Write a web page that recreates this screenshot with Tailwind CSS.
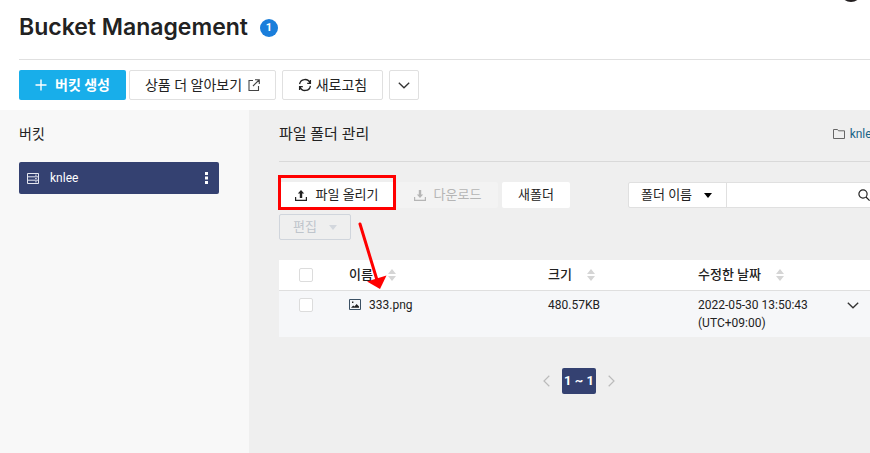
<!DOCTYPE html>
<html lang="ko">
<head>
<meta charset="utf-8">
<title>Bucket Management</title>
<script src="https://cdn.jsdelivr.net/npm/@tailwindcss/browser@4"></script>
</head>
<body class="relative flex min-h-screen flex-col overflow-x-hidden bg-white font-[Roboto,'Noto_Sans_CJK_KR',sans-serif] text-[13px] text-[#222]">
<div class="absolute -top-5 right-2 size-[22px] rounded-full bg-[#231f20]"></div>

<header class="pl-[19px]">
  <div class="flex h-[60px] items-center gap-3 border-b border-[#e0e0e0] pb-1">
    <h1 class="font-[Inter,sans-serif] text-[23px] font-semibold">Bucket Management</h1>
    <span class="flex size-[18px] items-center justify-center rounded-full bg-[#1a7edb] text-[11px] leading-none font-bold text-white">1</span>
  </div>
  <div class="flex h-[50px] items-center text-sm">
    <button class="mr-[3px] flex h-[30px] w-[107px] items-center justify-center gap-2 rounded-xs bg-[#18aeea] pb-px font-bold text-white">
      <svg class="size-3" viewBox="0 0 12 12" fill="none" stroke="currentColor" stroke-width="1.4"><path d="M6 .5v11M.5 6h11"/></svg>버킷 생성</button>
    <button class="mr-1.5 flex h-[30px] w-[147px] items-center justify-center gap-1.5 rounded-xs border border-[#e0e0e0] pb-px">상품 더 알아보기
      <svg class="size-3" viewBox="0 0 12 12" fill="none" stroke="#444" stroke-width="1.1"><path d="M5 1.5H1v10h9.5V7M7 .8h4.3V5M11 1 5 7"/></svg></button>
    <button class="mr-1.5 flex h-[30px] w-[101px] items-center justify-center gap-1 rounded-xs border border-[#e0e0e0] pb-px">
      <svg class="size-[14px]" viewBox="0 0 14 14" fill="none" stroke="#222" stroke-width="1.3"><path d="M1.6 6.2A5.4 5.4 0 0 1 12 5M12.4 7.8A5.4 5.4 0 0 1 2 9M12.4 2v3.3H9.2M1.6 12V8.7h3.2"/></svg>새로고침</button>
    <button aria-label="더 보기" class="flex h-[30px] w-[30px] items-center justify-center rounded-xs border border-[#e0e0e0]">
      <svg class="h-[7px] w-3" viewBox="0 0 12 7" fill="none" stroke="#333" stroke-width="1.3"><path d="m.8.8 5.2 5 5.2-5"/></svg></button>
  </div>
</header>

<div class="flex flex-1">
  <aside class="w-[249px] shrink-0 bg-[#f8f8f8] px-[19px] pt-3.5">
    <h2 class="text-sm leading-5">버킷</h2>
    <div class="mt-[18px] flex h-8 w-[200px] items-center rounded-xs bg-[#344171] px-2 text-white">
      <svg class="mr-[11px] h-[11px] w-3" viewBox="0 0 12 11" fill="none" stroke="#e4e6ef"><path d="M.5.5h11v10H.5zM.5 3.8h11M.5 7.2h11"/><path d="M8.2 2.2h1.5M8.2 5.5h1.5M8.2 8.8h1.5"/></svg>
      <a href="#" class="flex-1 text-xs">knlee</a>
      <button aria-label="메뉴" class="flex w-[10px] justify-center"><svg class="h-3 w-[3px]" viewBox="0 0 3 12" fill="currentColor"><path d="M0 0h3v3H0zM0 4.5h3v3H0zM0 9h3v3H0z"/></svg></button>
    </div>
  </aside>

  <main class="min-w-0 flex-1 overflow-hidden bg-[#efefef] pl-[30px]">
    <div class="flex h-[52px] items-center justify-between border-b border-[#d9d9d9] pb-[3px]">
      <h2 class="text-[15px]">파일 폴더 관리</h2>
      <nav class="-mr-2 flex items-center gap-[5px]">
        <svg class="h-[10px] w-3" viewBox="0 0 12 10" fill="none" stroke="#666"><path d="M.5 9.5v-9h4l1 1.3h6v7.7z"/></svg>
        <a href="#" class="text-xs text-[#1a6487]">knlee</a>
      </nav>
    </div>

    <div class="-mr-2 mt-5 flex items-start justify-between">
      <div>
        <div class="flex h-[26px] gap-1">
          <button class="relative flex w-[114px] items-center justify-center gap-2 bg-white pl-0.5">
            <svg class="h-[11px] w-3" viewBox="0 0 12 11" fill="#222"><path d="M6 0 2.8 3.5h2V8h2.4V3.5h2zM0 7h1.2v2.8h9.6V7H12v4H0z"/></svg>파일 올리기
            <span class="absolute -top-[7px] -right-[3px] -bottom-0.5 -left-px border-[3px] border-[#f00]"></span>
          </button>
          <button disabled class="flex w-[101px] items-center justify-center gap-2 rounded-xs bg-[#f3f3f3] text-[#b5b5b5]">
            <svg class="h-[11px] w-3" viewBox="0 0 12 11" fill="#b5b5b5"><path d="M6 8 2.8 4.5h2V0h2.4v4.5h2zM0 7h1.2v2.8h9.6V7H12v4H0z"/></svg>다운로드</button>
          <button class="w-[68px] rounded-xs bg-white">새폴더</button>
        </div>
        <button disabled class="mt-1.5 flex h-[26px] w-[72px] items-center justify-center gap-3 rounded-xs border border-[#d0d5dc] text-[#bfc5cc]">편집
          <svg class="h-[5px] w-2" viewBox="0 0 8 5" fill="#d3d7dd"><path d="M0 0h8L4 5z"/></svg></button>
      </div>
      <div class="flex h-[26px] w-[250px] rounded-xs border border-[#e0e0e0] bg-white">
        <div class="relative flex w-[98px] items-center border-r border-[#e0e0e0]">
          <select aria-label="검색 조건" class="w-full appearance-none pl-3 outline-none"><option>폴더 이름</option></select>
          <svg class="pointer-events-none absolute right-3.5 h-[5px] w-2" viewBox="0 0 8 5"><path d="M0 0h8L4 5z"/></svg>
        </div>
        <input aria-label="검색어" class="min-w-0 flex-1 px-2 outline-none">
        <button aria-label="검색" class="pr-[7px]"><svg class="size-3" viewBox="0 0 12 12" fill="none" stroke="#222" stroke-width="1.2"><circle cx="5" cy="5" r="4.1"/><path d="m8 8 3.6 3.6"/></svg></button>
      </div>
    </div>

    <table class="mt-5 w-full table-fixed border-collapse text-left">
      <colgroup><col class="w-[70px]"><col class="w-[199px]"><col class="w-[150px]"><col><col class="w-[34px]"></colgroup>
      <thead>
        <tr class="h-[30px] border-b border-[#dfdfdf] bg-white">
          <th class="pl-5"><input type="checkbox" aria-label="모두 선택" class="block size-[14px] appearance-none rounded-xs border border-[#dcdcdc] bg-white"></th>
          <th class="font-medium"><span class="flex items-center gap-[15px]">이름<svg class="h-3 w-2" viewBox="0 0 8 12" fill="#d5d5d5"><path d="m4 0 4 5H0zM4 12 0 7h8z"/></svg></span></th>
          <th class="font-medium"><span class="flex items-center gap-[15px]">크기<svg class="h-3 w-2" viewBox="0 0 8 12" fill="#d5d5d5"><path d="m4 0 4 5H0zM4 12 0 7h8z"/></svg></span></th>
          <th class="font-medium"><span class="flex items-center gap-[15px]">수정한 날짜<svg class="h-3 w-2" viewBox="0 0 8 12" fill="#d5d5d5"><path d="m4 0 4 5H0zM4 12 0 7h8z"/></svg></span></th>
          <th></th>
        </tr>
      </thead>
      <tbody>
        <tr class="bg-[#f6f7f9] align-top text-xs leading-[18px]">
          <td class="pt-[7px] pl-5"><input type="checkbox" aria-label="333.png 선택" class="block size-[14px] appearance-none rounded-xs border border-[#dcdcdc] bg-white"></td>
          <td class="pt-[5px]"><span class="flex items-center gap-2"><svg class="h-[11px] w-3" viewBox="0 0 12 11" fill="none" stroke="#3b5064"><path d="M.5.5h11v10H.5z"/><path d="m2 8.8 2.2-2.4 1.3 1L7.6 5 10 7.5v1.3zM3 2.5h1.4v1.4H3z" fill="#222" stroke="none"/></svg>333.png</span></td>
          <td class="pt-[5px]">480.57KB</td>
          <td class="pt-[5px] pb-[5px]">2022-05-30 13:50:43<br>(UTC+09:00)</td>
          <td class="pt-[11px] pl-[11px]"><button aria-label="펼치기" class="block"><svg class="h-[7px] w-3" viewBox="0 0 12 7" fill="none" stroke="#333" stroke-width="1.3"><path d="m.8.8 5.2 5 5.2-5"/></svg></button></td>
        </tr>
      </tbody>
    </table>

    <nav class="mt-[31px] -mr-[9px] flex items-center justify-center gap-3" aria-label="페이지">
      <button aria-label="이전"><svg class="h-3 w-[7px]" viewBox="0 0 7 12" fill="none" stroke="#bbb" stroke-width="1.2"><path d="M6.3.8 1 6l5.3 5.2"/></svg></button>
      <button class="h-[26px] w-[34px] rounded-xs bg-[#344171] font-bold text-white">1 ~ 1</button>
      <button aria-label="다음"><svg class="h-3 w-[7px]" viewBox="0 0 7 12" fill="none" stroke="#bbb" stroke-width="1.2"><path d="M.7.8 6 6 .7 11.2"/></svg></button>
    </nav>
  </main>
</div>

<svg class="pointer-events-none absolute top-[220px] left-[355px] h-[75px] w-10" viewBox="0 0 40 75"><path d="m5 4 17 56" stroke="red" stroke-width="3" stroke-linecap="round"/><path d="m12 61.5 19.5-6L25 69z" fill="red"/></svg>
</body>
</html>
